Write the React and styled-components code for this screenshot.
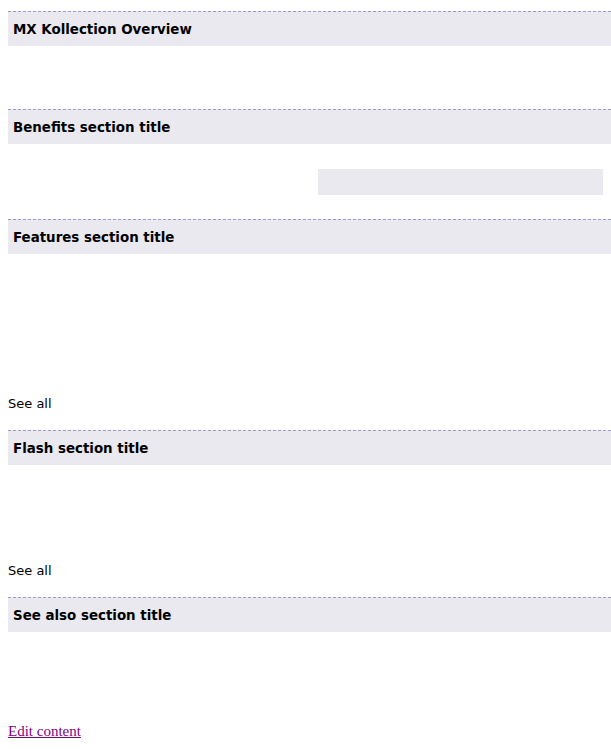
import React from 'react';
import styled, { createGlobalStyle } from 'styled-components';

const GlobalStyle = createGlobalStyle`
  html {
    overflow-x: hidden;
  }

  body {
    margin: 0;
    padding: 11px 8px 8px;
    background: #fff;
    font-family: "DejaVu Sans", Verdana, sans-serif;
    color: #000;
  }
`;

const Title = styled.h2`
  margin: 0 -8px 0 0;
  height: 33px;
  line-height: 34px;
  padding: 1px 5px 0;
  border-top: 1px dashed #9a9acb;
  background: #e9e9ef;
  font-size: 13.4px;
  font-weight: bold;
  white-space: nowrap;
`;

const Body = styled.div`
  box-sizing: border-box;
  display: flex;
  flex-direction: column;
  justify-content: flex-end;
  height: ${(p) => p.$height}px;
  padding-bottom: ${(p) => p.$bottom || 0}px;
`;

const BenefitsBody = styled.div`
  display: flex;
  justify-content: flex-end;
  padding: 25px 0 24px;
`;

const Teaser = styled.div`
  width: 285px;
  height: 26px;
  background: #e9e9ef;
`;

const SeeAll = styled.div`
  font-size: 13px;
  line-height: 16px;
`;

const EditLink = styled.a`
  display: inline-block;
  margin-top: 91px;
  font-family: "Liberation Serif", "Times New Roman", serif;
  font-size: 15px;
  color: #800080;
  text-decoration: underline;
`;

const App = () => (
  <>
    <GlobalStyle />

    <Title>MX Kollection Overview</Title>
    <Body $height={63} />

    <Title>Benefits section title</Title>
    <BenefitsBody>
      <Teaser />
    </BenefitsBody>

    <Title>Features section title</Title>
    <Body $height={176} $bottom={18}>
      <SeeAll>See all</SeeAll>
    </Body>

    <Title>Flash section title</Title>
    <Body $height={132} $bottom={18}>
      <SeeAll>See all</SeeAll>
    </Body>

    <Title>See also section title</Title>
    <EditLink href="#">Edit content</EditLink>
  </>
);

export default App;
